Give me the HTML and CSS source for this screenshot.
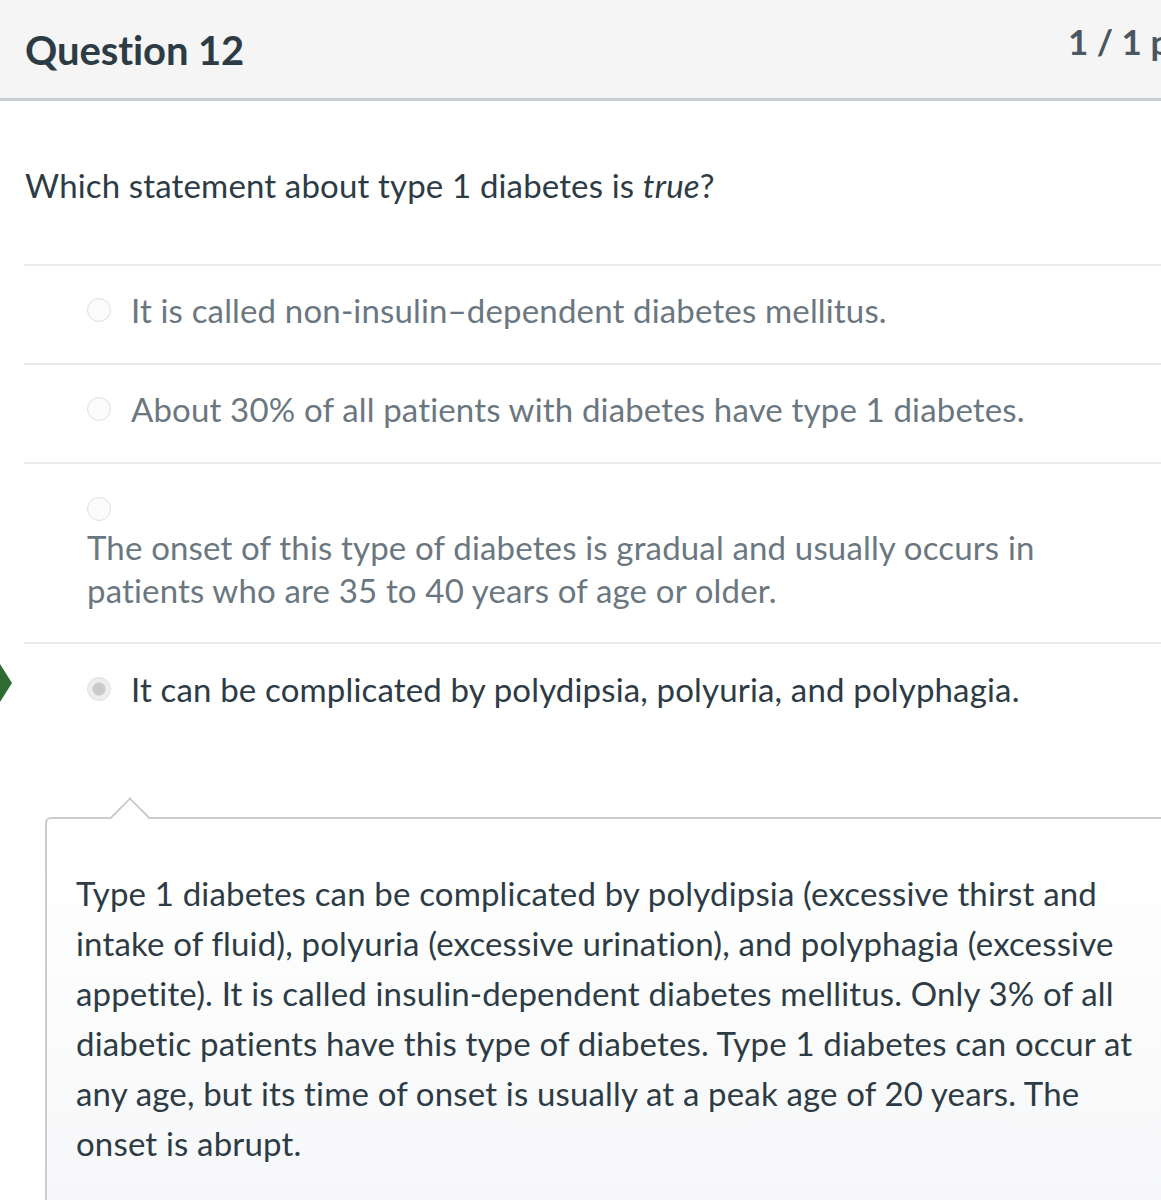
FILE: index.html
```html
<!DOCTYPE html>
<html>
<head>
<meta charset="utf-8">
<link rel="stylesheet" href="styles.css">
</head>
<body>
<div class="page">
  <div class="header">
    <h2 class="title">Question 12</h2>
    <span class="pts">1 / 1 pts</span>
  </div>
  <div class="body">
    <p class="qtext">Which statement about type 1 diabetes is <em>true</em>?</p>
    <div class="answers">
      <div class="answer">
        <span class="radio"></span>
        <span class="atext">It is called non-insulin–dependent diabetes mellitus.</span>
      </div>
      <div class="answer">
        <span class="radio"></span>
        <span class="atext">About 30% of all patients with diabetes have type 1 diabetes.</span>
      </div>
      <div class="answer stacked">
        <span class="radio"></span>
        <span class="atext">The onset of this type of diabetes is gradual and usually occurs in patients who are 35 to 40 years of age or older.</span>
      </div>
      <div class="answer selected">
        <span class="marker"></span>
        <span class="radio checked"></span>
        <span class="atext">It can be complicated by polydipsia, polyuria, and polyphagia.</span>
      </div>
    </div>
    <div class="comment">
      <div class="comment-box">
        <p class="ctext">Type 1 diabetes can be complicated by polydipsia (excessive thirst and intake of fluid), polyuria (excessive urination), and polyphagia (excessive appetite). It is called insulin-dependent diabetes mellitus. Only 3% of all diabetic patients have this type of diabetes. Type 1 diabetes can occur at any age, but its time of onset is usually at a peak age of 20 years. The onset is abrupt.</p>
      </div>
    </div>
  </div>
</div>
</body>
</html>
```
FILE: styles.css
```css
html, body {
  margin: 0;
  padding: 0;
  background: #ffffff;
  overflow: hidden;
}
body {
  font-family: Lato, "Liberation Sans", sans-serif;
  color: #2d3b45;
}
.page {
  width: 1161px;
  overflow: hidden;
}
.header {
  height: 98px;
  width: 1240px;
  background: #f5f5f5;
  border-bottom: 3px solid #c7cdd1;
  display: flex;
  align-items: center;
  justify-content: space-between;
  padding: 0 0 0 25px;
  box-sizing: content-box;
}
.title {
  margin: 0;
  font-size: 40px;
  font-weight: 700;
  letter-spacing: -0.1px;
  color: #2d3b45;
  position: relative;
  top: 1px;
}
.pts {
  font-size: 35px;
  font-weight: 700;
  color: #4a5660;
  width: 197px;
  position: relative;
  top: -8px;
}
.body {
  width: 1240px;
  padding: 0 0 0 24px;
}
.qtext {
  margin: 0;
  padding: 64px 0 59px 1px;
  font-size: 33px;
  line-height: 40px;
  letter-spacing: 0.15px;
}
.qtext em {
  font-style: italic;
}
.answers {
  display: flex;
  flex-direction: column;
}
.answer {
  position: relative;
  box-sizing: border-box;
  display: flex;
  align-items: flex-start;
  border-top: 2px solid #e8eaec;
  height: 99px;
  padding: 24px 0 0 63px;
  color: #6b7780;
  font-size: 33px;
  line-height: 40px;
  letter-spacing: 0.16px;
}
.answer .radio {
  width: 24px;
  height: 24px;
  border-radius: 50%;
  border: 1px solid #dcdfe1;
  background: #fbfbfb;
  box-sizing: border-box;
  flex: none;
  margin: 8px 20px 0 0;
}
.answer.stacked {
  flex-direction: column;
  height: 180px;
  padding-top: 33px;
}
.answer.stacked .radio {
  margin: 0 0 5px 0;
}
.answer.stacked .atext {
  line-height: 43px;
  width: 1000px;
}
.answer.selected {
  color: #2d3b45;
  height: auto;
  padding-top: 25px;
}
.answer.selected .radio {
  background: radial-gradient(circle, #c8cacc 0 6px, #ededed 7px);
}
.marker {
  position: absolute;
  left: -24px;
  top: 20px;
  width: 12px;
  height: 38px;
  background: #2e6b30;
  clip-path: polygon(0 0, 100% 50%, 0 100%);
}
.comment {
  padding: 108px 0 0 21px;
}
.comment-box {
  position: relative;
  border: 2px solid #c7cdd1;
  border-right: none;
  border-bottom: none;
  border-top-left-radius: 6px;
  background: linear-gradient(#ffffff 0, #ffffff 40px, #f4f5f7 100%);
  height: 420px;
  padding: 49px 0 0 29px;
}
.comment-box::before {
  content: "";
  position: absolute;
  top: -16px;
  left: 69px;
  width: 28px;
  height: 28px;
  box-sizing: border-box;
  background: #ffffff;
  border-top: 2px solid #c7cdd1;
  border-left: 2px solid #c7cdd1;
  transform: rotate(45deg);
}
.ctext {
  margin: 0;
  width: 1075px;
  font-size: 33px;
  line-height: 50px;
  letter-spacing: 0.16px;
  color: #2d3b45;
}
```
